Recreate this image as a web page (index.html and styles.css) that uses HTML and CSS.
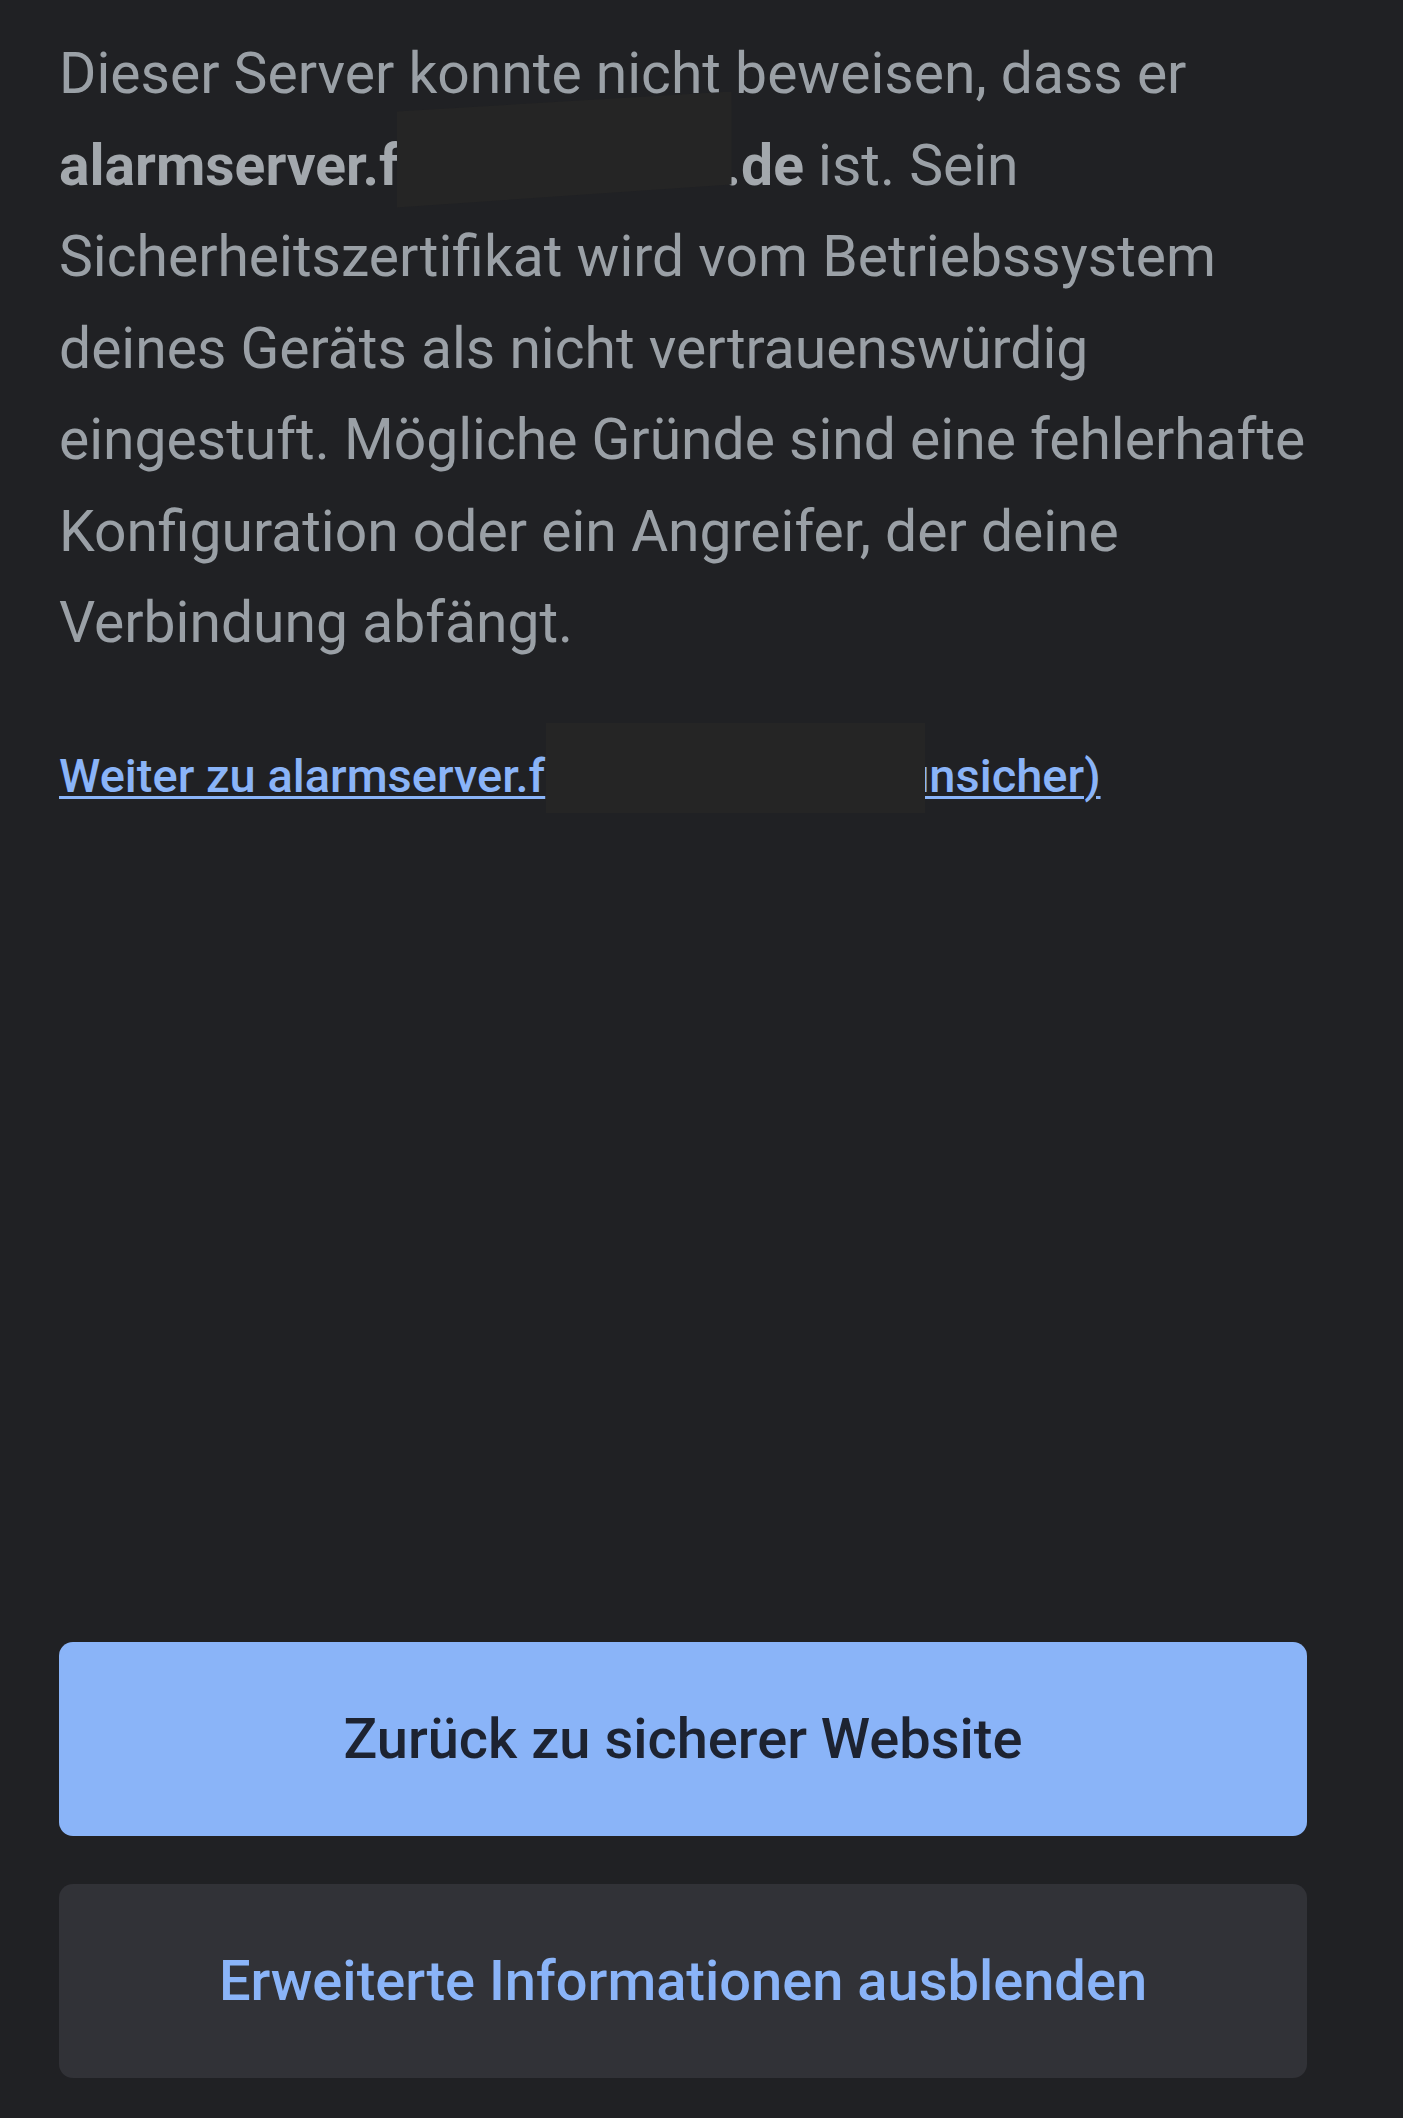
FILE: index.html
```html
<!DOCTYPE html>
<html lang="de">
<head>
<meta charset="utf-8">
<title>Datenschutzfehler</title>
<link rel="stylesheet" href="styles.css">
</head>
<body>
<div class="page">
  <main class="details">
    <p class="explanation">Dieser Server konnte nicht beweisen, dass er<br><strong>alarmserver.f<span class="hidden-part host-gap"><span class="redact redact-host"></span></span>.de</strong> ist. Sein<br>Sicherheitszertifikat wird vom Betriebssystem<br>deines Geräts als nicht vertrauenswürdig<br>eingestuft. Mögliche Gründe sind eine fehlerhafte<br>Konfiguration oder ein Angreifer, der deine<br>Verbindung abfängt.</p>
    <p class="proceed"><a class="proceed-link" href="#">Weiter zu alarmserver.f<span class="hidden-part link-gap"><span class="redact redact-link"></span></span>unsicher)</a></p>
  </main>
  <div class="actions">
    <button class="btn btn-primary" type="button">Zurück zu sicherer Website</button>
    <button class="btn btn-secondary" type="button">Erweiterte Informationen ausblenden</button>
  </div>
</div>
</body>
</html>
```
FILE: styles.css
```css
html, body {
  margin: 0;
  padding: 0;
  background: #202124;
}

body {
  font-family: Roboto, "Noto Sans", "Liberation Sans", sans-serif;
  color: #9aa0a6;
}

.page {
  box-sizing: border-box;
  min-height: 2118px;
  display: flex;
  flex-direction: column;
  padding: 28px 96px 40px 59px;
}

.details {
  display: flex;
  flex-direction: column;
}

.explanation {
  margin: 0;
  font-size: 57px;
  line-height: 91.5px;
  white-space: nowrap;
}

.explanation strong {
  font-weight: 700;
  color: #a3a8ad;
}

.hidden-part {
  position: relative;
  display: inline-block;
  height: 0;
}

.host-gap {
  width: 325px;
}

.link-gap {
  width: 358px;
}

.redact {
  position: absolute;
  background: #252525;
}

.redact-host {
  left: -3px;
  top: -93px;
  width: 335px;
  height: 116px;
  clip-path: polygon(0 20px, 100% 0, 100% 93px, 0 116px);
}

.redact-link {
  left: 1px;
  top: -69px;
  width: 379px;
  height: 90px;
}

.proceed {
  margin: 77px 0 0;
  font-size: 47px;
  line-height: 60px;
  white-space: nowrap;
}

.proceed-link {
  color: #8ab4f8;
  font-weight: 500;
  text-decoration: underline;
  text-decoration-thickness: 3px;
  text-underline-offset: 4px;
}

.actions {
  margin-top: auto;
  display: flex;
  flex-direction: column;
  gap: 48px;
}

.btn {
  display: flex;
  align-items: center;
  justify-content: center;
  width: 100%;
  height: 194px;
  border: none;
  border-radius: 14px;
  font-family: Roboto, "Noto Sans", "Liberation Sans", sans-serif;
  font-size: 56px;
  font-weight: 500;
  padding: 0;
}

.btn-primary {
  background: #8ab4f8;
  color: #1d2331;
}

.btn-secondary {
  background: #313237;
  color: #8ab4f8;
}
```
